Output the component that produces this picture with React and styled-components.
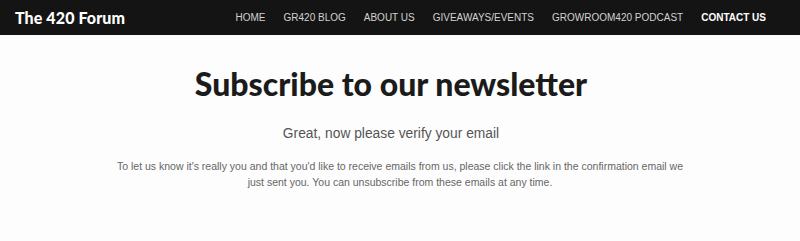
import React from 'react';
import styled, { createGlobalStyle } from 'styled-components';

const GlobalStyle = createGlobalStyle`
  body {
    margin: 0;
    background: #fdfdfd;
    font-family: "Liberation Sans", Arial, sans-serif;
  }
`;

const Header = styled.header`
  height: 35px;
  background: #151414;
  display: flex;
  align-items: center;
  justify-content: space-between;
  padding: 0 34px 0 15px;
`;

const Logo = styled.div`
  font-family: Lato, "Noto Sans", sans-serif;
  font-weight: 900;
  font-size: 16px;
  color: #fff;
  letter-spacing: 0.1px;
`;

const Nav = styled.nav`
  display: flex;
  gap: 18px;
`;

const NavLink = styled.a`
  font-size: 10px;
  color: ${(p) => (p.active ? '#fff' : '#d2d2d2')};
  font-weight: ${(p) => (p.active ? 700 : 400)};
  text-transform: uppercase;
  text-decoration: none;
`;

const Main = styled.main`
  display: flex;
  flex-direction: column;
  align-items: center;
  padding-top: 29px;
  text-align: center;
`;

const Heading = styled.div`
  display: flex;
  flex-direction: column;
  align-items: center;
  padding-right: 18px;
`;

const Title = styled.h1`
  margin: 0;
  font-family: Lato, "Noto Sans", sans-serif;
  font-weight: 900;
  font-size: 32px;
  color: #1b1b1b;
`;

const Subtitle = styled.p`
  margin: 23px 0 0;
  font-size: 13.8px;
  color: #555;
`;

const Body = styled.p`
  margin: 17px 0 0;
  max-width: 580px;
  font-size: 10.5px;
  line-height: 16px;
  color: #666;
`;

const links = ['Home', 'GR420 Blog', 'About Us', 'Giveaways/Events', 'Growroom420 Podcast'];

export default function App() {
  return (
    <>
      <GlobalStyle />
      <Header>
        <Logo>The 420 Forum</Logo>
        <Nav>
          {links.map((l) => (
            <NavLink key={l}>{l}</NavLink>
          ))}
          <NavLink active>Contact Us</NavLink>
        </Nav>
      </Header>
      <Main>
        <Heading>
          <Title>Subscribe to our newsletter</Title>
          <Subtitle>Great, now please verify your email</Subtitle>
        </Heading>
        <Body>
          To let us know it's really you and that you'd like to receive emails from us, please click the link in
          the confirmation email we just sent you. You can unsubscribe from these emails at any time.
        </Body>
      </Main>
    </>
  );
}
